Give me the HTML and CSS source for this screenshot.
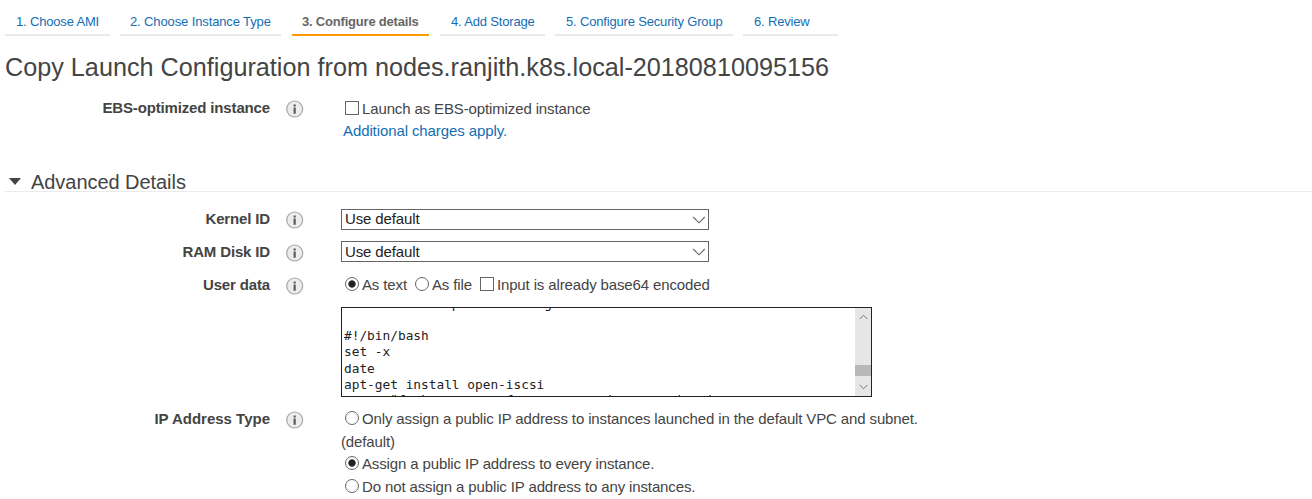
FILE: index.html
```html
<!DOCTYPE html>
<html lang="en">
<head>
<meta charset="utf-8">
<title>Copy Launch Configuration</title>
<link rel="stylesheet" href="styles.css">
</head>
<body>
<svg class="defs" width="0" height="0">
  <symbol id="info" viewBox="0 0 18 18">
    <circle cx="8.7" cy="9" r="8" fill="#ececec" stroke="#a8a8a8" stroke-width="1.2"/>
    <path d="M7.6 4.4h2.1v2H7.6zM7.6 7.6h2.1v6.2H7.6z" fill="#555"/>
  </symbol>
  <symbol id="chevron" viewBox="0 0 14 8">
    <path d="M1.2 1l5.8 5.8L12.8 1" fill="none" stroke="#666" stroke-width="1.1"/>
  </symbol>
</svg>
<nav class="steps">
  <a class="step s1"><span>1. Choose AMI</span></a>
  <a class="step s2"><span>2. Choose Instance Type</span></a>
  <a class="step s3 active"><span>3. Configure details</span></a>
  <a class="step s4"><span>4. Add Storage</span></a>
  <a class="step s5"><span>5. Configure Security Group</span></a>
  <a class="step s6"><span>6. Review</span></a>
</nav>
<h1><span>Copy Launch Configuration from nodes.ranjith.k8s.local-20180810095156</span></h1>
<div class="row ebs">
  <div class="label"><span>EBS-optimized instance</span></div>
  <svg class="info"><use href="#info"/></svg>
  <div class="field">
    <div class="option"><i class="check"></i><span>Launch as EBS-optimized instance</span></div>
    <div class="option link"><span>Additional charges apply.</span></div>
  </div>
</div>
<h2><svg class="caret" viewBox="0 0 12 7"><path d="M0 0h12L6 7z" fill="#444"/></svg><span>Advanced Details</span></h2>
<div class="row kernel">
  <div class="label"><span>Kernel ID</span></div>
  <svg class="info"><use href="#info"/></svg>
  <div class="field"><div class="select"><span>Use default</span><svg class="chevron"><use href="#chevron"/></svg></div></div>
</div>
<div class="row ram">
  <div class="label"><span>RAM Disk ID</span></div>
  <svg class="info"><use href="#info"/></svg>
  <div class="field"><div class="select"><span>Use default</span><svg class="chevron"><use href="#chevron"/></svg></div></div>
</div>
<div class="row data">
  <div class="label"><span>User data</span></div>
  <svg class="info"><use href="#info"/></svg>
  <div class="field">
    <div class="option inline">
      <i class="radio on"></i><span class="o1">As text</span>
      <i class="radio"></i><span class="o2">As file</span>
      <i class="check"></i><span>Input is already base64 encoded</span>
    </div>
    <div class="editor">
<pre>              p           g

#!/bin/bash
set -x
date
apt-get install open-iscsi<span class="last">      "f  k          f            i        i   i</span></pre>
      <div class="scrollbar">
        <svg viewBox="0 0 9 6"><path d="M.7 5L4.5 1.2 8.3 5" fill="none" stroke="#777"/></svg>
        <div class="thumb"></div>
        <svg viewBox="0 0 9 6"><path d="M.7 1l3.8 3.8L8.3 1" fill="none" stroke="#777"/></svg>
      </div>
    </div>
  </div>
</div>
<div class="row ip">
  <div class="label"><span>IP Address Type</span></div>
  <svg class="info"><use href="#info"/></svg>
  <div class="field">
    <div class="option"><i class="radio"></i><span>Only assign a public IP address to instances launched in the default VPC and subnet.</span></div>
    <div class="option wrap"><span>(default)</span></div>
    <div class="option"><i class="radio on"></i><span>Assign a public IP address to every instance.</span></div>
    <div class="option"><i class="radio"></i><span>Do not assign a public IP address to any instances.</span></div>
  </div>
</div>
</body>
</html>
```
FILE: styles.css
```css
* { box-sizing: border-box; }
body {
  margin: 0;
  height: 499px;
  overflow: hidden;
  background: #fff;
  color: #444;
  font: 15px/22.6px "Liberation Sans", Arial, sans-serif;
  letter-spacing: -0.13px;
  white-space: nowrap;
}
.defs { display: block; }
svg { flex: none; }
.steps { display: flex; padding: 8px 0 0 5px; height: 36px; }
.step {
  height: 28px;
  padding-left: 11px;
  border-bottom: 2px solid #eaeaea;
  color: #146eb4;
  font-size: 13px;
  line-height: 28px;
  letter-spacing: -0.17px;
}
.s1 { width: 105px; margin-right: 10px; }
.s2 { width: 161px; margin-right: 11px; padding-left: 10px; letter-spacing: -0.12px; }
.s3 { width: 137px; margin-right: 11px; }
.s4 { width: 105px; margin-right: 10px; }
.s5 { width: 178px; margin-right: 10px; }
.s6 { width: 95px; }
.active { padding-left: 10px; color: #666; font-weight: bold; border-color: #f90; letter-spacing: -0.2px; }
h1 { margin: 0; padding: 15px 0 0 5px; height: 61px; font-size: 25.2px; line-height: 32px; font-weight: normal; letter-spacing: 0.01px; }
.row { display: flex; align-items: flex-start; }
.label { width: 270px; text-align: right; font-weight: bold; letter-spacing: -0.15px; }
.ip .label { letter-spacing: 0; }
.info { width: 18px; height: 18px; margin: 3px 37px 0 16px; }
.option { display: flex; align-items: center; height: 22.6px; padding-left: 4px; }
.ebs { height: 74px; }
.ebs .field { padding-top: 1px; }
.ebs .link { height: 21px; padding-left: 2px; color: #146eb4; letter-spacing: -0.1px; }
.check, .radio { flex: none; width: 14px; height: 14px; margin-right: 3px; margin-top: -3px; border: 1px solid #666; background: #fff; }
.radio { border-radius: 50%; }
.on { background: radial-gradient(circle, #222 0 3.3px, #fff 4px); }
h2 {
  display: flex;
  margin: 0 0 0 5px;
  height: 21px;
  border-bottom: 1px solid #eaeaea;
  font-size: 20px;
  line-height: 22px;
  font-weight: normal;
  letter-spacing: -0.05px;
}
.caret { width: 12px; height: 7px; margin: 7px 10px 0 4px; }
.kernel { padding-top: 16px; height: 49px; }
.ram { height: 33px; }
.select {
  display: flex;
  justify-content: space-between;
  align-items: center;
  width: 368px;
  height: 21px;
  margin-top: 1px;
  padding: 0 2px 0 3px;
  border: 1px solid #666;
  color: #222;
  line-height: 18px;
}
.kernel .select span { padding-bottom: 2px; }
.ram .select { margin-top: 0; }
.chevron { width: 14px; height: 8px; }
.data { height: 134px; }
.o1, .o2 { margin-right: 8px; }
.editor { display: flex; justify-content: space-between; width: 531px; height: 90px; margin-top: 10px; border: 1px solid #222; overflow: hidden; }
.editor pre {
  margin: -12px 0 0 2px;
  color: #222;
  font: 12.8px/16.3px "DejaVu Sans Mono", monospace;
  letter-spacing: 0;
}
.last { display: block; margin-top: -1.3px; }
.scrollbar { display: flex; flex-direction: column; align-items: center; width: 16px; padding: 6px 0; background: #e6e6e6; }
.scrollbar svg { width: 9px; height: 6px; }
.thumb { width: 16px; height: 12px; margin: 45px 0 8px; background: #b8b8b8; }
.ip .wrap { padding-left: 0; }
```
